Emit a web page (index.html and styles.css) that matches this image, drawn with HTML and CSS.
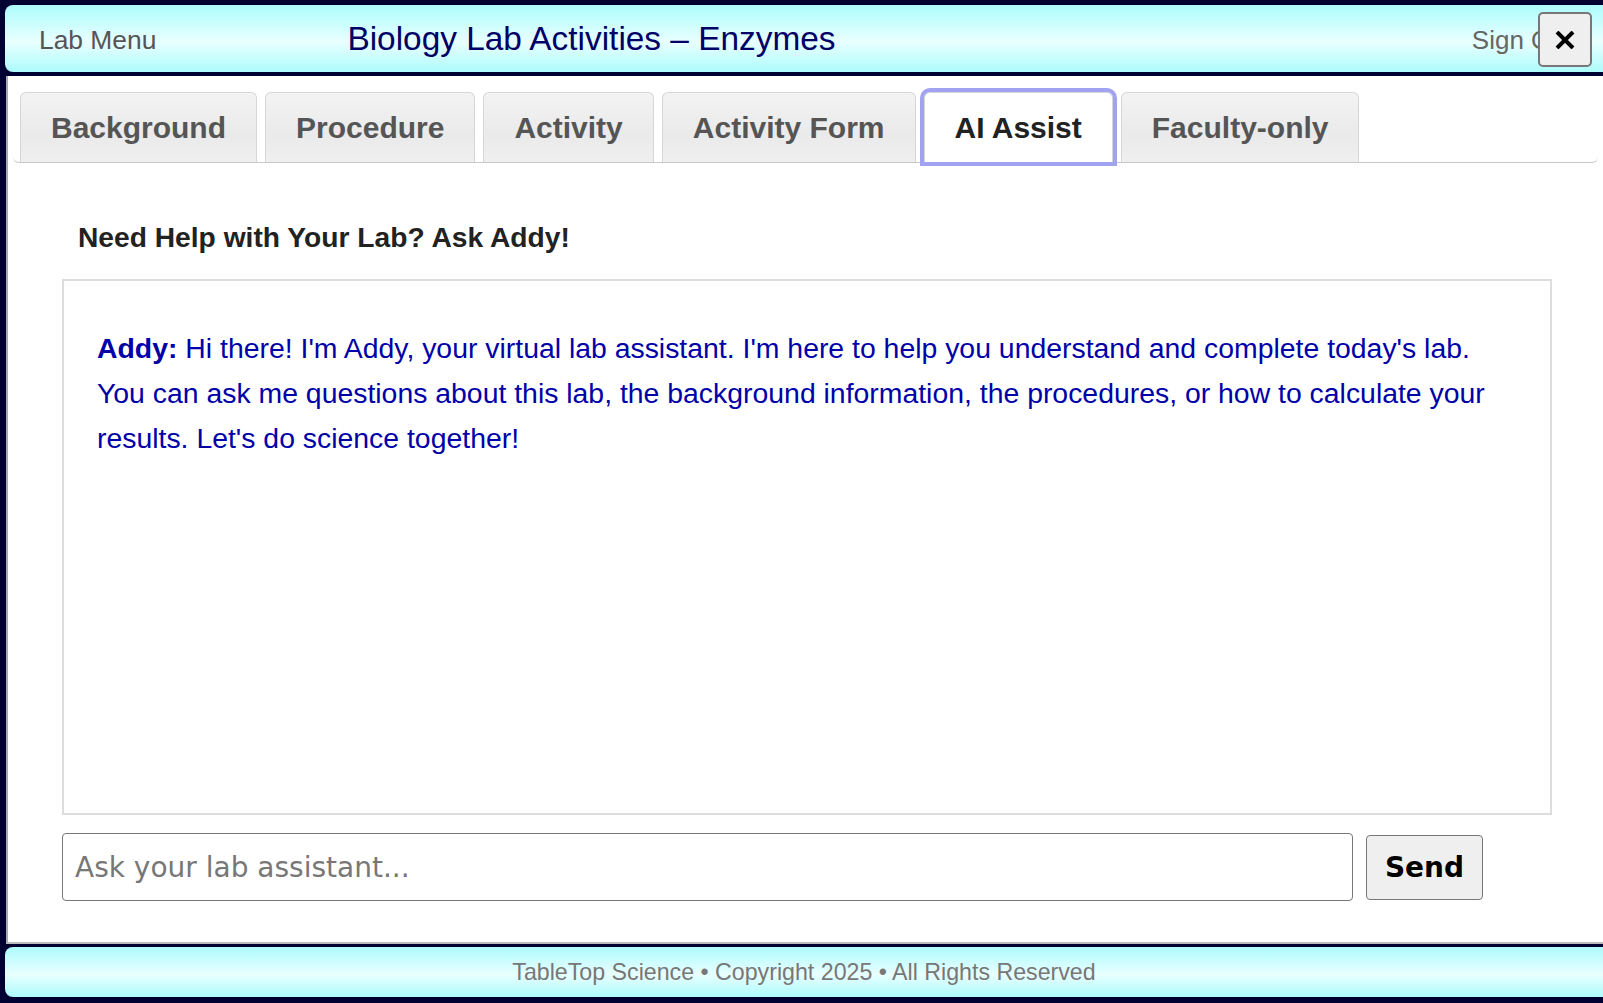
FILE: index.html
```html
<!DOCTYPE html>
<html lang="en">

    <head>
        <meta charset="UTF-8">
        <meta name="viewport" content="width=device-width, initial-scale=1.0">
        <title>Biology Lab Activities – Enzymes</title>
        <link rel="stylesheet" href="styles.css">
    </head>

    <body>
        <div class="page">
            <header class="top-bar">
                <a class="lab-menu" href="#">Lab Menu</a>
                <h1 class="lab-title">Biology Lab Activities – Enzymes</h1>
                <a class="sign-out" href="#">Sign Out</a>
                <button class="close-btn" aria-label="Close">
                    <svg width="20" height="18" viewBox="0 0 20 18">
                        <path d="M2 1 L18 17 M18 1 L2 17" stroke="#000" stroke-width="4" />
                    </svg>
                </button>
            </header>

            <main class="content">
                <nav class="tabs">
                    <button class="tab">Background</button>
                    <button class="tab">Procedure</button>
                    <button class="tab">Activity</button>
                    <button class="tab">Activity Form</button>
                    <button class="tab active">AI Assist</button>
                    <button class="tab">Faculty-only</button>
                </nav>

                <section class="assist">
                    <h2 class="assist-title">Need Help with Your Lab? Ask Addy!</h2>

                    <div class="chat-box">
                        <p class="msg"><span class="who">Addy:</span>&nbsp;Hi there! I'm Addy, your virtual lab assistant. I'm here to help you understand and complete today's lab. You can ask me questions about this lab, the background information, the procedures, or how to calculate your results. Let's do science together!</p>
                    </div>

                    <div class="ask-row">
                        <input class="ask-input" type="text" placeholder="Ask your lab assistant...">
                        <button class="send-btn">Send</button>
                    </div>
                </section>
            </main>

            <footer class="bottom-bar">TableTop Science • Copyright 2025 • All Rights Reserved</footer>
        </div>
    </body>

</html>
```

FILE: styles.css
```css
body {
    margin: 0;
    background-color: #000033;
    font-family: "Liberation Sans", Arial, Helvetica, sans-serif;
}

.page {
    display: flex;
    flex-direction: column;
    height: 100vh;
}

/* верхняя панель */
.top-bar {
    position: relative;
    display: flex;
    align-items: center;
    height: 67px;
    margin: 5px 0 0 5px;
    border-radius: 8px 0 0 8px;
    background: linear-gradient(to bottom, #adfbfc 0%, #e9ffff 55%, #adfbfc 100%);
}

.lab-menu {
    margin: 4px 0 0 34px;
    font-size: 26.4px;
    color: #555;
    text-decoration: none;
}

.lab-title {
    margin: 0 0 0 191px;
    font-size: 33.4px;
    font-weight: normal;
    color: #000066;
}

.sign-out {
    margin: 4px 30px 0 auto;
    font-size: 26px;
    color: #666;
    text-decoration: none;
}

.close-btn {
    position: absolute;
    top: 7px;
    right: 11px;
    width: 54px;
    height: 55px;
    padding: 0;
    display: flex;
    align-items: center;
    justify-content: center;
    background-color: #efefef;
    border: 2px solid #777;
    border-radius: 5px;
}

/* основная область */
.content {
    flex: 1;
    margin: 4px 0 0 6px;
    background-color: #fff;
    border-left: 2px solid #aaa;
    border-bottom: 2px solid #bbb;
}

.tabs {
    display: flex;
    gap: 8px;
    margin: 16px 5px 0 5px;
    padding-left: 7px;
    border-bottom: 1px solid #c8c8c8;
    border-radius: 0 0 6px 6px;
}

.tab {
    height: 70px;
    padding: 0 30px;
    font-family: inherit;
    font-size: 30px;
    font-weight: bold;
    color: #555;
    background: linear-gradient(to bottom, #f3f3f3 0%, #eaeaea 60%, #efefef 100%);
    border: 1px solid #d6d6d6;
    border-bottom: none;
    border-radius: 6px 6px 0 0;
}

.tab.active {
    color: #222;
    background: #fff;
    outline: 4px solid #a2a2f2;
}

.assist {
    padding: 0 51px 0 54px;
}

.assist-title {
    margin: 58px 0 26px 0;
    padding-left: 16px;
    font-size: 28.2px;
    line-height: 32px;
    color: #222;
}

.chat-box {
    box-sizing: border-box;
    height: 536px;
    padding: 45px 40px 45px 33px;
    border: 2px solid #ddd;
}

.msg {
    margin: 0;
    font-size: 28.4px;
    line-height: 45px;
    color: #0000a8;
}

.who {
    font-weight: bold;
}

.ask-row {
    display: flex;
    align-items: center;
    gap: 13px;
    margin-top: 18px;
}

.ask-input {
    box-sizing: border-box;
    width: 1291px;
    height: 68px;
    padding: 0 12px;
    font-family: "DejaVu Sans", Verdana, sans-serif;
    font-size: 28px;
    border: 1px solid #777;
    border-radius: 4px;
}

.ask-input::placeholder {
    color: #777;
}

.send-btn {
    box-sizing: border-box;
    width: 117px;
    height: 65px;
    font-family: "DejaVu Sans", Verdana, sans-serif;
    font-size: 28px;
    font-weight: bold;
    color: #000;
    background-color: #efefef;
    border: 1px solid #777;
    border-radius: 4px;
}

/* нижняя панель */
.bottom-bar {
    height: 50px;
    margin: 3px 0 6px 5px;
    border-radius: 8px 0 0 8px;
    background: linear-gradient(to bottom, #adfbfc 0%, #e9ffff 55%, #adfbfc 100%);
    font-size: 23.2px;
    line-height: 50px;
    text-align: center;
    color: #777;
}
```
